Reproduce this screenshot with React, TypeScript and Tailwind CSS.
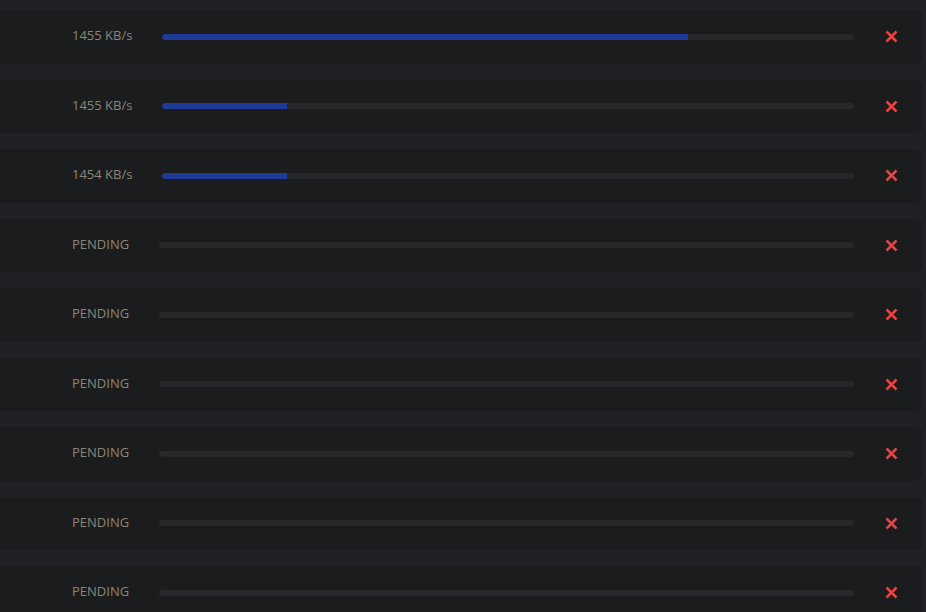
import React from 'react';

interface Transfer {
  id: number;
  speed: string | null; // null => pending
  progress: number;
}

const TRANSFERS: Transfer[] = [
  { id: 1, speed: '1455 KB/s', progress: 76 },
  { id: 2, speed: '1455 KB/s', progress: 18 },
  { id: 3, speed: '1454 KB/s', progress: 18 },
  { id: 4, speed: null, progress: 0 },
  { id: 5, speed: null, progress: 0 },
  { id: 6, speed: null, progress: 0 },
  { id: 7, speed: null, progress: 0 },
  { id: 8, speed: null, progress: 0 },
  { id: 9, speed: null, progress: 0 },
];

const CancelIcon = () => (
  <svg width="13" height="13" viewBox="0 0 13 13" className="block">
    <path d="M1.5 1.5 L11.5 11.5 M11.5 1.5 L1.5 11.5" stroke="#e84343" strokeWidth="2.5" fill="none" />
  </svg>
);

const TransferRow: React.FC<{ item: Transfer }> = ({ item }) => (
  <div className="shrink-0 h-[53.5px] mr-[4px] bg-[#1b1c1e] rounded-r-md flex items-center pl-[72px] pr-[24px]">
    <span className="text-[13px] leading-none text-[#8b8677] mb-[2px]">
      {item.speed ?? 'PENDING'}
    </span>
    <div className="flex-1 ml-[30px] h-[6px] rounded-full bg-[#26282b] overflow-hidden">
      {item.progress > 0 && (
        <div className="h-full rounded-l-full bg-[#1f3a98]" style={{ width: `${item.progress}%` }}></div>
      )}
    </div>
    <button className="ml-[31px] w-[13px] h-[13px] flex items-center justify-center">
      <CancelIcon />
    </button>
  </div>
);

export default function App() {
  return (
    <div
      className="w-[926px] h-[612px] overflow-hidden bg-[#202124] pt-[10px] flex flex-col gap-4"
      style={{ fontFamily: '"Open Sans", "Liberation Sans", sans-serif' }}
    >
      {TRANSFERS.map(t => (
        <TransferRow key={t.id} item={t} />
      ))}
    </div>
  );
}
